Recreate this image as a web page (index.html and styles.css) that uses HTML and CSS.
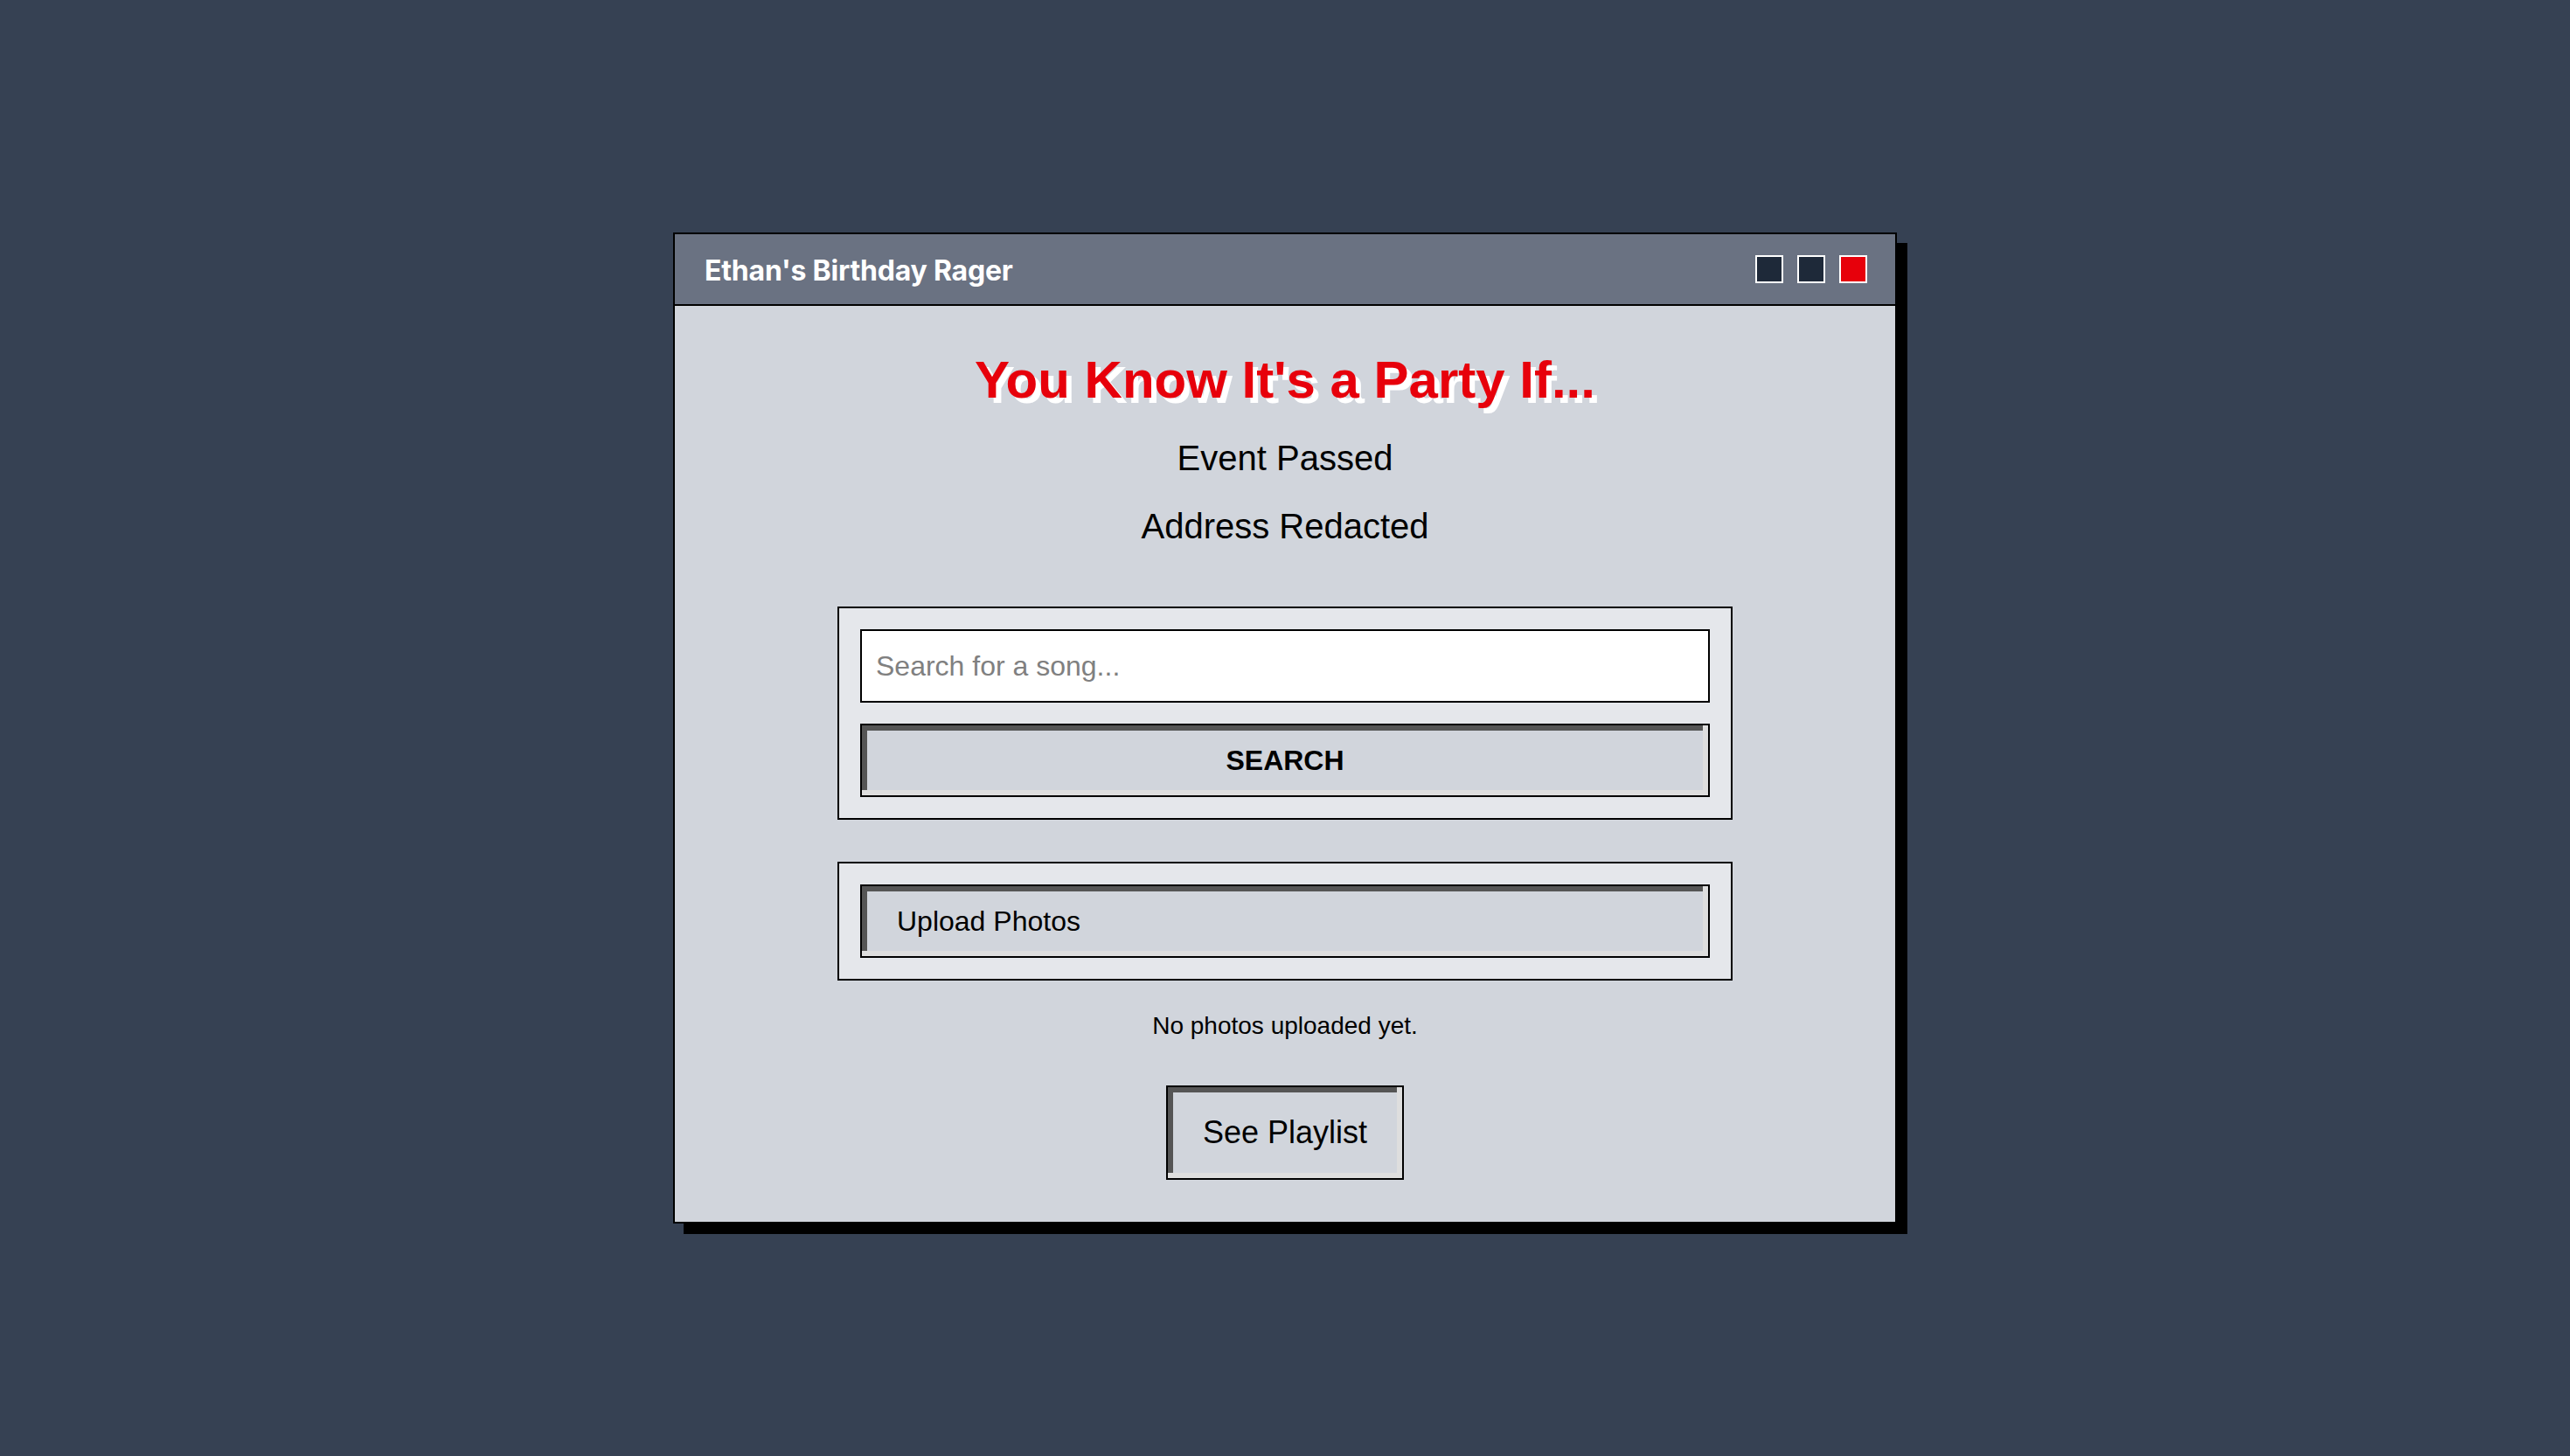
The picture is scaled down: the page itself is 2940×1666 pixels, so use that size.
FILE: index.html
```html
<!DOCTYPE html>
<html lang="en">
<head>
<meta charset="utf-8">
<title>Ethan's Birthday Rager</title>
<link rel="stylesheet" href="styles.css">
</head>
<body class="page">
  <div class="window">
    <header class="titlebar">
      <span class="title">Ethan's Birthday Rager</span>
      <div class="controls">
        <span class="ctl"></span>
        <span class="ctl"></span>
        <span class="ctl ctl-close"></span>
      </div>
    </header>
    <main class="content">
      <h1 class="headline">You Know It's a Party If...</h1>
      <p class="meta">Event Passed</p>
      <p class="meta meta-last">Address Redacted</p>
      <section class="panel">
        <input class="search-input" type="text" placeholder="Search for a song...">
        <button class="btn btn-search" type="button">Search</button>
      </section>
      <section class="panel panel-upload">
        <label class="btn btn-upload">Upload Photos</label>
      </section>
      <p class="empty">No photos uploaded yet.</p>
      <button class="btn btn-playlist" type="button">See Playlist</button>
    </main>
  </div>
</body>
</html>
```

FILE: styles.css
```css
* {
  box-sizing: border-box;
}

html, body {
  margin: 0;
  padding: 0;
}

.page {
  min-height: 100vh;
  background: #364153;
  display: flex;
  align-items: center;
  justify-content: center;
  font-family: "Liberation Sans", Arial, sans-serif;
  color: #000;
}

.window {
  width: 1400px;
  border: 2px solid #000;
  background: #d1d5dc;
  box-shadow: 12px 12px 0 #000;
}

.titlebar {
  height: 82px;
  padding: 2px 32px 0 34px;
  background: #6a7282;
  border-bottom: 2px solid #000;
  display: flex;
  align-items: center;
  justify-content: space-between;
}

.title {
  font-family: Inter, "Liberation Sans", sans-serif;
  font-weight: 700;
  font-size: 32px;
  color: #fff;
  letter-spacing: -0.2px;
}

.controls {
  display: flex;
  gap: 16px;
  margin-top: -2px;
}

.ctl {
  width: 32px;
  height: 32px;
  border: 2px solid #fff;
  background: #1e2939;
}

.ctl-close {
  background: #e7000b;
}

.content {
  display: flex;
  flex-direction: column;
  align-items: center;
  padding: 50px 48px 48px;
}

.headline {
  margin: 0 0 32px;
  font-size: 60px;
  line-height: 69px;
  font-weight: 700;
  color: #e7000b;
  text-shadow: 6px 6px 0 #fff;
}

.meta {
  margin: 0 0 32px;
  font-size: 40px;
  line-height: 46px;
}

.meta-last {
  margin-bottom: 69px;
}

.panel {
  width: 1024px;
  padding: 24px;
  background: #e5e7eb;
  border: 2px solid #000;
  display: flex;
  flex-direction: column;
  gap: 24px;
}

.panel-upload {
  margin-top: 48px;
}

.search-input {
  width: 100%;
  height: 84px;
  padding: 16px;
  border: 2px solid #000;
  background: #fff;
  font-family: "Liberation Sans", Arial, sans-serif;
  font-size: 32px;
  line-height: 48px;
  color: #000;
  outline: none;
}

.search-input::placeholder {
  color: #808080;
}

.btn {
  display: block;
  border: 2px solid #000;
  background: #d1d5dc;
  box-shadow: inset -6px -6px 0 #dedede, inset 6px 6px 0 #555;
  font-family: "Liberation Sans", Arial, sans-serif;
  color: #000;
  margin: 0;
}

.btn-search {
  width: 100%;
  padding: 16px;
  font-size: 32px;
  line-height: 48px;
  font-weight: 700;
  text-transform: uppercase;
  text-align: center;
}

.btn-upload {
  width: 100%;
  padding: 16px 40px;
  font-size: 32px;
  line-height: 48px;
  text-align: left;
}

.empty {
  margin: 32px 0 0;
  font-size: 28px;
  line-height: 40px;
}

.btn-playlist {
  margin-top: 48px;
  padding: 24px 40px;
  font-size: 36px;
  line-height: 56px;
}
```
